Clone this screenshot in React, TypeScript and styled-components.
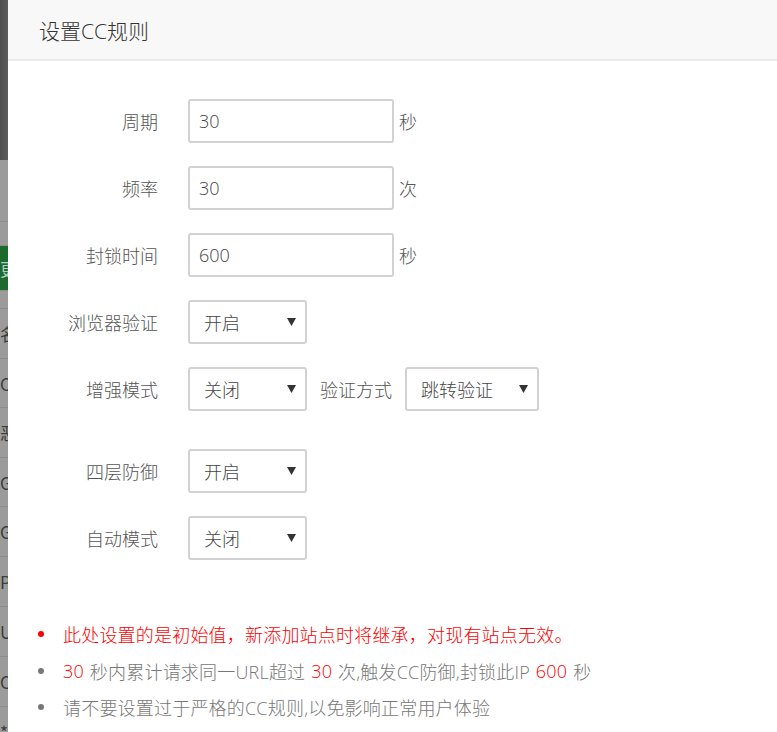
import React from 'react';
import styled, { createGlobalStyle } from 'styled-components';

const GlobalStyle = createGlobalStyle`
  html, body {
    margin: 0;
    padding: 0;
    width: 777px;
    height: 732px;
    overflow: hidden;
    background: #fff;
  }
  body {
    font-family: "Open Sans", "Noto Sans CJK SC", sans-serif;
  }
`;

const Page = styled.div`
  display: flex;
  width: 777px;
  height: 732px;
  overflow: hidden;
`;

/* the shaded page behind the dialog, only 8px of it shows */
const Backdrop = styled.div`
  width: 8px;
  flex: none;
  display: flex;
  flex-direction: column;
  overflow: hidden;
  background: #9b9b9b;
`;

const BackdropTop = styled.div`
  height: 160px;
  flex: none;
  background: linear-gradient(to right, #4f4f4f, #5c5c5c);
`;

const BackdropRow = styled.div<{ $h: number; $green?: boolean }>`
  height: ${(p) => p.$h}px;
  flex: none;
  box-sizing: border-box;
  border-bottom: 1px solid #8d8d8d;
  background: ${(p) => (p.$green ? '#1c6a2d' : 'transparent')};
  color: ${(p) => (p.$green ? '#b9cdbd' : '#3d3d3d')};
  font-family: "Noto Sans CJK SC", sans-serif;
  font-size: 17px;
  line-height: ${(p) => p.$h}px;
  white-space: nowrap;
`;

const Dialog = styled.div`
  flex: 1;
  display: flex;
  flex-direction: column;
  background: #fff;
  font-weight: 300;
`;

const Header = styled.div`
  height: 59px;
  flex: none;
  display: flex;
  align-items: center;
  padding-left: 31px;
  background: #f8f8f8;
  border-bottom: 2px solid #ebebeb;
  color: #333;
  font-size: 21px;
`;

const Form = styled.div`
  display: flex;
  flex-direction: column;
  padding-top: 38px;
`;

const Row = styled.div<{ $extra?: number }>`
  display: flex;
  align-items: center;
  height: 44px;
  margin-bottom: 23px;
  margin-top: ${(p) => p.$extra || 0}px;
`;

const Label = styled.div`
  width: 150px;
  flex: none;
  text-align: right;
  margin-right: 30px;
  color: #555;
  font-size: 18px;
`;

const InlineLabel = styled.span`
  margin: 0 13px;
  color: #555;
  font-size: 18px;
`;

const TextInput = styled.input`
  box-sizing: border-box;
  width: 206px;
  height: 44px;
  padding: 0 9px;
  border: 2px solid #d2d2d2;
  border-radius: 3px;
  font-family: inherit;
  font-weight: 300;
  font-size: 18px;
  color: #444;
  outline: none;
`;

const Unit = styled.span`
  margin-left: 5px;
  color: #555;
  font-size: 18px;
`;

const SelectBox = styled.div<{ $w: number }>`
  box-sizing: border-box;
  width: ${(p) => p.$w}px;
  height: 44px;
  display: flex;
  align-items: center;
  justify-content: space-between;
  padding: 0 9px 0 14px;
  border: 2px solid #d2d2d2;
  border-radius: 3px;
  color: #444;
  font-size: 18px;
`;

const Notes = styled.ul`
  list-style: none;
  margin: 33px 0 0 0;
  padding: 0 0 0 30px;
`;

const Note = styled.li<{ $red?: boolean }>`
  display: flex;
  align-items: center;
  height: 36.5px;
  font-size: 18px;
  white-space: pre;
  word-spacing: 1px;
  letter-spacing: 0.2px;
  color: ${(p) => (p.$red ? '#ff0000' : '#777')};

  &::before {
    content: '';
    flex: none;
    width: 6px;
    height: 6px;
    border-radius: 50%;
    margin-right: 19px;
    background: ${(p) => (p.$red ? '#ff0000' : '#777')};
  }
`;

const Num = styled.span`
  color: #ff0000;
`;

const Arrow = () => (
  <svg width="9" height="8" viewBox="0 0 9 8">
    <path d="M0 0 H9 L4.5 8 Z" fill="#333" />
  </svg>
);

const Select = ({ value, width }: { value: string; width: number }) => (
  <SelectBox $w={width}>
    <span>{value}</span>
    <Arrow />
  </SelectBox>
);

const backdropRows: { h: number; t: string; green?: boolean }[] = [
  { h: 62, t: '' },
  { h: 24, t: '' },
  { h: 45, t: '更', green: true },
  { h: 18, t: '' },
  { h: 50, t: '名' },
  { h: 49, t: 'C' },
  { h: 50, t: '恶' },
  { h: 49, t: 'G' },
  { h: 50, t: 'G' },
  { h: 50, t: 'P' },
  { h: 50, t: 'U' },
  { h: 50, t: 'C' },
  { h: 50, t: '*' },
];

export default function App() {
  return (
    <Page>
      <GlobalStyle />
      <Backdrop>
        <BackdropTop />
        {backdropRows.map((r, i) => (
          <BackdropRow key={i} $h={r.h} $green={r.green}>
            {r.t}
          </BackdropRow>
        ))}
      </Backdrop>
      <Dialog>
        <Header>设置CC规则</Header>
        <Form>
          <Row>
            <Label>周期</Label>
            <TextInput defaultValue="30" />
            <Unit>秒</Unit>
          </Row>
          <Row>
            <Label>频率</Label>
            <TextInput defaultValue="30" />
            <Unit>次</Unit>
          </Row>
          <Row>
            <Label>封锁时间</Label>
            <TextInput defaultValue="600" />
            <Unit>秒</Unit>
          </Row>
          <Row>
            <Label>浏览器验证</Label>
            <Select value="开启" width={119} />
          </Row>
          <Row>
            <Label>增强模式</Label>
            <Select value="关闭" width={119} />
            <InlineLabel>验证方式</InlineLabel>
            <Select value="跳转验证" width={134} />
          </Row>
          <Row $extra={15}>
            <Label>四层防御</Label>
            <Select value="开启" width={119} />
          </Row>
          <Row>
            <Label>自动模式</Label>
            <Select value="关闭" width={119} />
          </Row>
        </Form>
        <Notes>
          <Note $red>此处设置的是初始值，新添加站点时将继承，对现有站点无效。</Note>
          <Note>
            <Num>30</Num> 秒内累计请求同一URL超过 <Num>30</Num> 次,触发CC防御,封锁此IP <Num>600</Num> 秒
          </Note>
          <Note>请不要设置过于严格的CC规则,以免影响正常用户体验</Note>
        </Notes>
      </Dialog>
    </Page>
  );
}
